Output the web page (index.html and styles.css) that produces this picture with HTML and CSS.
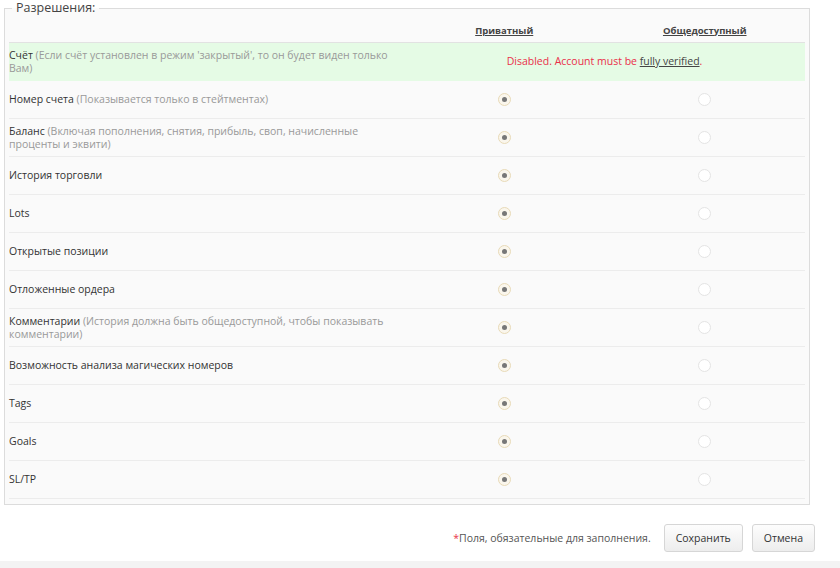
FILE: index.html
```html
<!DOCTYPE html>
<html lang="ru">
<head>
<meta charset="utf-8">
<link rel="stylesheet" href="styles.css">
</head>
<body>
<div class="page">
  <fieldset class="perm">
    <legend class="perm-legend">Разрешения:</legend>
    <table class="grid">
      <thead>
        <tr>
          <th class="col-label"></th>
          <th class="col-opt"><span class="head-link">Приватный</span></th>
          <th class="col-opt"><span class="head-link">Общедоступный</span></th>
        </tr>
      </thead>
      <tbody>
        <tr class="row-disabled">
          <td class="label">Счёт <span class="hint">(Если счёт установлен в режим 'закрытый', то он будет виден только Вам)</span></td>
          <td class="notice" colspan="2">Disabled. Account must be <a class="verify" href="#">fully verified</a>.</td>
        </tr>
        <tr><td class="label">Номер счета <span class="hint">(Показывается только в стейтментах)</span></td><td class="opt"><span class="radio on"></span></td><td class="opt"><span class="radio"></span></td></tr>
        <tr><td class="label">Баланс <span class="hint">(Включая пополнения, снятия, прибыль, своп, начисленные проценты и эквити)</span></td><td class="opt"><span class="radio on"></span></td><td class="opt"><span class="radio"></span></td></tr>
        <tr><td class="label">История торговли</td><td class="opt"><span class="radio on"></span></td><td class="opt"><span class="radio"></span></td></tr>
        <tr><td class="label">Lots</td><td class="opt"><span class="radio on"></span></td><td class="opt"><span class="radio"></span></td></tr>
        <tr><td class="label">Открытые позиции</td><td class="opt"><span class="radio on"></span></td><td class="opt"><span class="radio"></span></td></tr>
        <tr><td class="label">Отложенные ордера</td><td class="opt"><span class="radio on"></span></td><td class="opt"><span class="radio"></span></td></tr>
        <tr><td class="label">Комментарии <span class="hint">(История должна быть общедоступной, чтобы показывать комментарии)</span></td><td class="opt"><span class="radio on"></span></td><td class="opt"><span class="radio"></span></td></tr>
        <tr><td class="label">Возможность анализа магических номеров</td><td class="opt"><span class="radio on"></span></td><td class="opt"><span class="radio"></span></td></tr>
        <tr><td class="label">Tags</td><td class="opt"><span class="radio on"></span></td><td class="opt"><span class="radio"></span></td></tr>
        <tr><td class="label">Goals</td><td class="opt"><span class="radio on"></span></td><td class="opt"><span class="radio"></span></td></tr>
        <tr><td class="label">SL/TP</td><td class="opt"><span class="radio on"></span></td><td class="opt"><span class="radio"></span></td></tr>
      </tbody>
    </table>
  </fieldset>
  <div class="actions">
    <span class="required"><span class="star">*</span>Поля, обязательные для заполнения.</span>
    <button class="btn" type="button">Сохранить</button>
    <button class="btn" type="button">Отмена</button>
  </div>
</div>
</body>
</html>
```
FILE: styles.css
```css
html, body {
  margin: 0;
  padding: 0;
}
body {
  background: #f3f3f3;
  font-family: "Open Sans", "DejaVu Sans", sans-serif;
  font-size: 10.5px;
  color: #333;
}
.page {
  background: #fff;
  height: 561px;
  box-shadow: 0 1px 3px rgba(0, 0, 0, 0.25);
  padding: 0 0 0 4px;
  box-sizing: border-box;
}
.perm {
  margin: 0;
  width: 806px;
  box-sizing: border-box;
  border: 1px solid #dcdcdc;
  background: #fafafa;
  padding: 0 4px 5px 4px;
  min-inline-size: 0;
}
.perm-legend {
  margin-left: 3px;
  padding: 0 4px;
  font-size: 12.5px;
  line-height: 16px;
  color: #444;
}
.grid {
  width: 100%;
  border-collapse: collapse;
  table-layout: fixed;
}
.col-label { width: 394px; }
.col-opt { width: 200px; }
.grid thead th {
  height: 24px;
  padding: 2px 0 0 0;
  border-bottom: 1px solid #e2e2e2;
  font-weight: bold;
  font-size: 9.5px;
  color: #444;
  vertical-align: middle;
}
.head-link {
  text-decoration: underline;
}
.grid tbody td {
  height: 37px;
  padding: 0;
  border-bottom: 1px solid #ececec;
  vertical-align: middle;
  line-height: 13px;
}
.label {
  padding-right: 6px !important;
  color: #333;
}
.hint {
  color: #999;
}
.row-disabled td {
  background: #e5fbe5;
  border-bottom-color: #e5fbe5 !important;
}
.notice {
  text-align: center;
  color: #ea2f4a;
}
.verify {
  color: #444;
  text-decoration: underline;
}
.opt {
  text-align: center;
}
.radio {
  display: inline-block;
  width: 13px;
  height: 13px;
  box-sizing: border-box;
  border: 1px solid #e4e4e4;
  border-radius: 50%;
  background: #fff;
  vertical-align: middle;
  position: relative;
}
.radio.on {
  border-color: #e8dab8;
  background: #faf6ec;
}
.radio.on::after {
  content: "";
  position: absolute;
  left: 3px;
  top: 3px;
  width: 5px;
  height: 5px;
  border-radius: 50%;
  background: #777;
}
.actions {
  display: flex;
  justify-content: flex-end;
  align-items: center;
  gap: 9px;
  padding: 19px 25px 0 0;
}
.required {
  color: #555;
  margin-right: 4px;
}
.star {
  color: #e8334a;
}
.btn {
  height: 28px;
  padding: 0 11px;
  font-family: "Open Sans", "DejaVu Sans", sans-serif;
  font-size: 10.5px;
  color: #333;
  background: linear-gradient(#fdfdfd, #ededed);
  border: 1px solid #d6d6d6;
  border-radius: 3px;
}
```
